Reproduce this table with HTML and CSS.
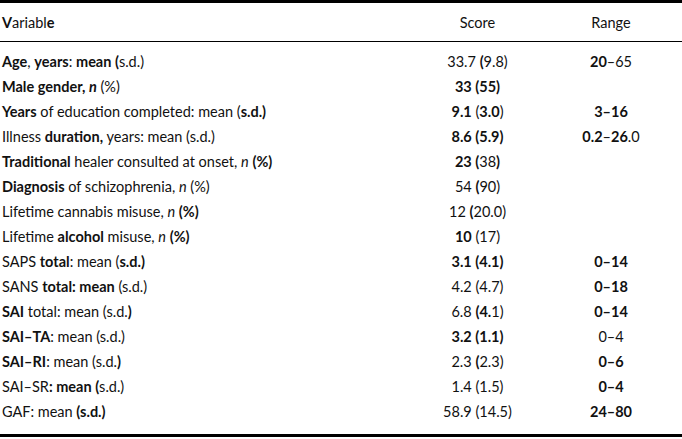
FILE: index.html
```html
<!DOCTYPE html>
<html>
<head>
<meta charset="utf-8">
<link rel="stylesheet" href="styles.css">
</head>
<body>
<table class="tbl">
<thead>
<tr><th class="var"><b>V</b>ariabl<b>e</b></th><th class="num">Score</th><th class="rng">Range</th></tr>
</thead>
<tbody>
<tr><td class="var"><b>Age</b>, <b>years</b>: <b>mean (</b>s.d.)</td><td class="num">33.7 <b>(</b>9.8)</td><td class="rng"><b>20</b>–65</td></tr>
<tr><td class="var"><b>Male gender, <i>n</i></b> (%)</td><td class="num"><b>33 (55)</b></td><td class="rng"></td></tr>
<tr><td class="var"><b>Years</b> of education completed: mean (<b>s.d.)</b></td><td class="num"><b>9.1</b> (<b>3.0</b>)</td><td class="rng"><b>3–16</b></td></tr>
<tr><td class="var">Illness <b>duration, </b>years: mean (s.d.)</td><td class="num"><b>8.6 (5.9)</b></td><td class="rng"><b>0.2</b>–<b>26</b>.0</td></tr>
<tr><td class="var"><b>Traditional</b> healer consulted at onset, <i>n</i> <b>(%)</b></td><td class="num"><b>23 (</b>38<b>)</b></td><td class="rng"></td></tr>
<tr><td class="var"><b>Diagnosis</b> of schizophrenia, <i>n</i> (%)</td><td class="num">54 <b>(</b>90)</td><td class="rng"></td></tr>
<tr><td class="var">Lifetime cannabis misuse, <i>n</i> <b>(%)</b></td><td class="num">12 <b>(</b>20.0)</td><td class="rng"></td></tr>
<tr><td class="var">Lifetime <b>alcohol</b> misuse, <i>n</i> <b>(%)</b></td><td class="num"><b>10</b> (17)</td><td class="rng"></td></tr>
<tr><td class="var">SAPS <b>total</b>: mean (<b>s.d.)</b></td><td class="num"><b>3.1 (4.1)</b></td><td class="rng"><b>0–14</b></td></tr>
<tr><td class="var">SANS <b>total: mean</b> (s.d.)</td><td class="num">4.2 (4.7)</td><td class="rng"><b>0–18</b></td></tr>
<tr><td class="var"><b>SAI</b> total: mean (s.d.<b>)</b></td><td class="num">6.8 <b>(4.</b>1)</td><td class="rng"><b>0–14</b></td></tr>
<tr><td class="var"><b>SAI–TA</b>: mean (s.d.)</td><td class="num"><b>3.2 (1.1)</b></td><td class="rng">0–4</td></tr>
<tr><td class="var"><b>SAI–RI</b>: mean (s.d.<b>)</b></td><td class="num">2.3 <b>(</b>2.3)</td><td class="rng"><b>0–6</b></td></tr>
<tr><td class="var">SAI–SR<b>: mean (</b>s.d.)</td><td class="num">1.4 (1.5)</td><td class="rng"><b>0–4</b></td></tr>
<tr><td class="var">GAF: mean <b>(s.d.)</b></td><td class="num">58.9 (14.5)</td><td class="rng"><b>24–80</b></td></tr>
</tbody>
</table>
</body>
</html>
```
FILE: styles.css
```css
html, body {
  margin: 0;
  padding: 0;
  background: #fff;
}
body {
  font-family: "Lato", "Open Sans", sans-serif;
  font-size: 14.5px;
  color: #111;
}
.tbl {
  width: 682px;
  border-collapse: collapse;
  border-top: 3px solid #000;
  border-bottom: 3px solid #000;
}
.tbl b { font-weight: 700; }
.tbl i { font-style: italic; }
.tbl th {
  font-weight: 400;
  height: 38px;
  padding: 0;
  border-bottom: 1px solid #000;
  vertical-align: middle;
}
.tbl td {
  height: 25px;
  padding: 0;
  vertical-align: middle;
  white-space: nowrap;
}
.tbl tbody tr:first-child td { padding-top: 7px; }
.tbl tbody tr:last-child td { padding-bottom: 10px; }
.var { text-align: left; padding-left: 2px !important; width: 413px; }
.num { text-align: center; width: 125px; }
.rng { text-align: center; }
```
